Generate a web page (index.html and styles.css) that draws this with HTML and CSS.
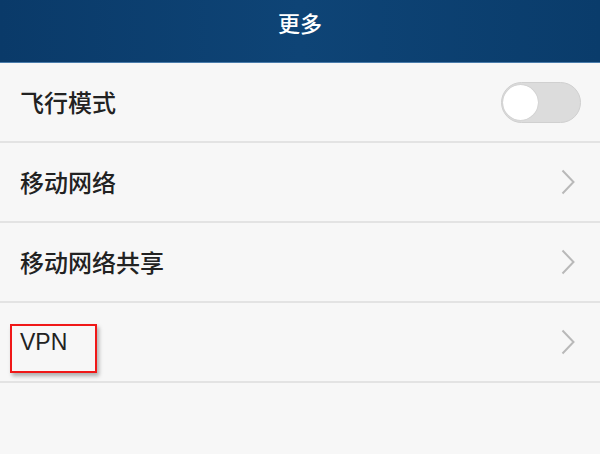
FILE: index.html
```html
<!DOCTYPE html>
<html lang="zh-CN">
<head>
<meta charset="utf-8">
<title>更多</title>
<link rel="stylesheet" href="styles.css">
</head>
<body>
<header class="topbar"><h1 class="title">更多</h1></header>
<ul class="list">
  <li class="row">
    <span class="label">飞行模式</span>
    <span class="switch"><span class="knob"></span></span>
  </li>
  <li class="row">
    <span class="label">移动网络</span>
    <svg class="chev" width="14" height="26" viewBox="0 0 14 26"><path d="M1.5 1.5 L12.5 13 L1.5 24.5" fill="none" stroke="#b9b9b9" stroke-width="2"/></svg>
  </li>
  <li class="row">
    <span class="label">移动网络共享</span>
    <svg class="chev" width="14" height="26" viewBox="0 0 14 26"><path d="M1.5 1.5 L12.5 13 L1.5 24.5" fill="none" stroke="#b9b9b9" stroke-width="2"/></svg>
  </li>
  <li class="row">
    <span class="label latin">VPN</span>
    <span class="highlight"></span>
    <svg class="chev" width="14" height="26" viewBox="0 0 14 26"><path d="M1.5 1.5 L12.5 13 L1.5 24.5" fill="none" stroke="#b9b9b9" stroke-width="2"/></svg>
  </li>
</ul>
</body>
</html>
```
FILE: styles.css
```css
html, body {
  margin: 0;
  padding: 0;
  background: #f7f7f7;
  font-family: "Noto Sans CJK SC", "Liberation Sans", sans-serif;
}
.topbar {
  height: 63px;
  background: linear-gradient(90deg, #0a3a69 0%, #0e4476 50%, #0a3c6b 100%);
  border-bottom: 1px solid #4a7cab;
  box-sizing: border-box;
  display: flex;
  align-items: center;
  justify-content: center;
}
.title {
  margin: 0 0 18px 0;
  color: #ffffff;
  font-size: 22px;
  font-weight: 500;
  line-height: 1;
}
.list {
  list-style: none;
  margin: 0;
  padding: 0;
}
.row {
  position: relative;
  height: 80px;
  box-sizing: border-box;
  border-bottom: 2px solid #e3e3e3;
  display: flex;
  align-items: center;
  justify-content: space-between;
  padding: 0 19px 0 20px;
}
.label {
  color: #222222;
  font-size: 24px;
  font-weight: 500;
  line-height: 1;
}
.latin {
  font-family: "Liberation Sans", sans-serif;
  font-size: 23px;
  font-weight: normal;
}
.switch {
  width: 80px;
  height: 41px;
  box-sizing: border-box;
  border-radius: 21px;
  background: #dcdcdc;
  border: 1px solid #d0d0d0;
  display: flex;
  align-items: center;
  padding-left: 1px;
}
.knob {
  width: 35px;
  height: 35px;
  border-radius: 50%;
  background: #ffffff;
  box-shadow: 0 0 1px rgba(0,0,0,0.25);
}
.chev {
  display: block;
  margin-right: 6px;
}
.highlight {
  position: absolute;
  left: 10px;
  top: 21px;
  width: 87px;
  height: 49px;
  box-sizing: border-box;
  border: 2px solid #f01818;
  box-shadow: 2px 3px 4px rgba(0,0,0,0.3);
}
```
